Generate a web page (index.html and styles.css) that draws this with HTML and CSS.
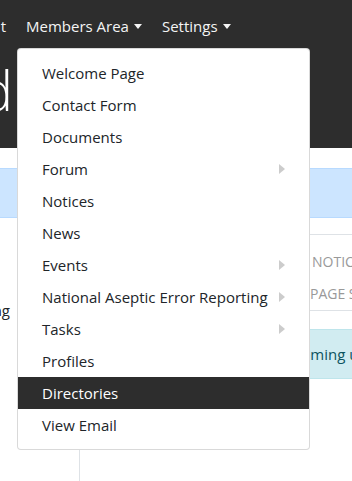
FILE: index.html
```html
<!DOCTYPE html>
<html lang="en">
<head>
<meta charset="utf-8">
<title>Members Area</title>
<link rel="stylesheet" href="styles.css">
</head>
<body>
<header class="top">
  <nav class="navbar">
    <a class="nav-link nav-clip" href="#">About</a>
    <div class="nav-item">
      <a class="nav-link toggle" href="#">Members Area<span class="caret"></span></a>
      <ul class="dropdown">
        <li class="dd-item">Welcome Page</li>
        <li class="dd-item">Contact Form</li>
        <li class="dd-item">Documents</li>
        <li class="dd-item">Forum<span class="sub-caret"></span></li>
        <li class="dd-item">Notices</li>
        <li class="dd-item">News</li>
        <li class="dd-item">Events<span class="sub-caret"></span></li>
        <li class="dd-item">National Aseptic Error Reporting<span class="sub-caret"></span></li>
        <li class="dd-item">Tasks<span class="sub-caret"></span></li>
        <li class="dd-item">Profiles</li>
        <li class="dd-item active">Directories</li>
        <li class="dd-item">View Email</li>
      </ul>
    </div>
    <a class="nav-link toggle settings" href="#">Settings<span class="caret"></span></a>
  </nav>
  <h1 class="display"><span>Dashboard</span></h1>
</header>
<main class="content">
  <div class="alert alert-primary">Welcome to the members area.</div>
  <div class="columns">
    <aside class="side">
      <p class="side-text"><span>Error Reporting</span></p>
    </aside>
    <section class="main">
      <ul class="sections">
        <li class="sec-row first">Notices</li>
        <li class="sec-row">Page Settings</li>
      </ul>
      <div class="alert alert-info">Upcoming updates</div>
    </section>
  </div>
</main>
</body>
</html>
```
FILE: styles.css
```css
* { box-sizing: border-box; }
html, body { margin: 0; padding: 0; }
body {
  width: 352px;
  height: 481px;
  overflow: hidden;
  background: #fff;
  color: #212529;
  font-family: "Open Sans", "Noto Sans", sans-serif;
  font-size: 15px;
  line-height: 24px;
}
a { text-decoration: none; }

.top {
  background: #2d2d2d;
  height: 148px;
}
.navbar {
  display: flex;
  align-items: flex-start;
  height: 52px;
  padding-top: 6px;
}
.nav-link {
  display: flex;
  align-items: center;
  padding: 8px;
  line-height: 24px;
  color: #f4f4f4;
  white-space: nowrap;
}
.nav-clip {
  width: 18px;
  padding-left: 6px;
  padding-right: 12px;
  justify-content: flex-end;
}
.nav-item { position: relative; }
.settings { margin-left: 4px; }
.caret {
  display: inline-block;
  margin-left: 5px;
  border-top: 5px solid #f4f4f4;
  border-left: 4px solid transparent;
  border-right: 4px solid transparent;
}

.dropdown {
  position: absolute;
  top: calc(100% + 2px);
  left: -1px;
  z-index: 10;
  width: 293px;
  margin: 0;
  padding: 8px 0;
  list-style: none;
  background: #fff;
  border: 1px solid rgba(0, 0, 0, 0.15);
  border-radius: 4px;
}
.dd-item {
  display: flex;
  align-items: center;
  justify-content: space-between;
  padding: 4px 24px;
  line-height: 24px;
  color: #212529;
  white-space: nowrap;
}
.dd-item.active {
  background: #2d2d2d;
  color: #fff;
}
.sub-caret {
  border-left: 6px solid #ccc;
  border-top: 5px solid transparent;
  border-bottom: 5px solid transparent;
}

.display {
  display: flex;
  justify-content: flex-end;
  width: 13px;
  margin: 4px 0 0;
  color: #fff;
  font-size: 56px;
  font-weight: 300;
  line-height: 67px;
  white-space: nowrap;
}

.content { padding-top: 20px; }
.alert {
  border: 1px solid transparent;
  padding: 12px 20px;
  white-space: nowrap;
}
.alert-primary {
  margin: 0 -20px;
  padding-left: 40px;
  background: #cce5ff;
  border-color: #b8daff;
  color: #004085;
}
.alert-info {
  margin: 18px -40px 0 173px;
  background: #d1ecf1;
  border-color: #bee5eb;
  color: #0c5460;
}

.columns {
  display: grid;
  grid-template-columns: 80px 1fr;
  margin-top: 16px;
  min-height: 260px;
}
.side { border-right: 1px solid #dee2e6; }
.side-text {
  display: flex;
  justify-content: flex-end;
  width: 10px;
  margin: 64px 0 0;
  white-space: nowrap;
}
.sections {
  list-style: none;
  margin: 0;
  padding: 11px 0 0 230px;
  border-top: 1px solid #dee2e6;
  border-bottom: 1px solid #dee2e6;
}
.sec-row {
  line-height: 32px;
  font-size: 14px;
  color: #999;
  text-transform: uppercase;
  white-space: nowrap;
}
.sec-row.first { padding-left: 2px; }
```
